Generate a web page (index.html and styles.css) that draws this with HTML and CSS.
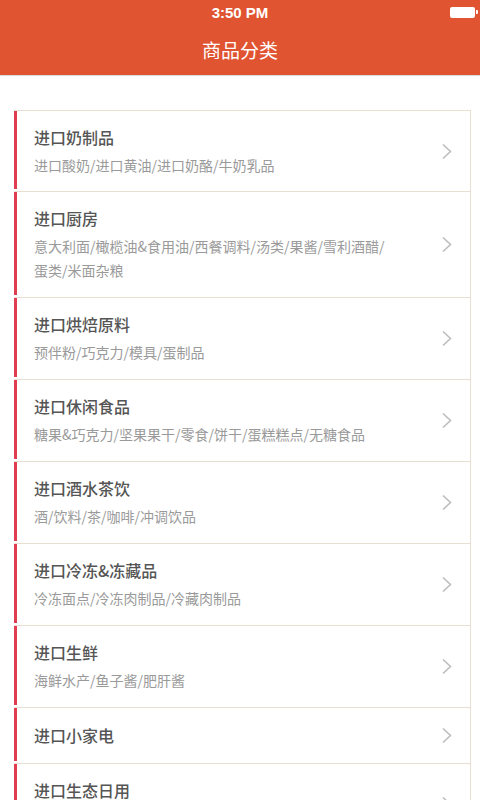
FILE: index.html
```html
<!DOCTYPE html>
<html>
  <head>
    <meta charset="utf-8">
    <title>商品分类</title>
    <link rel="stylesheet" href="styles.css">
  </head>
  <body>
    <div class="header">
      <div class="status-bar">
        <span></span>
        <span class="time">3:50 PM</span>
        <span class="battery"><span class="battery-body"></span><span class="battery-nub"></span></span>
      </div>
      <p class="title">商品分类</p>
    </div>

    <div class="category-list">
      <div class="category">
        <div class="bar"></div>
        <div class="info first">
          <p class="name">进口奶制品</p>
          <p class="sub">进口酸奶/进口黄油/进口奶酪/牛奶乳品</p>
        </div>
        <svg class="arrow" width="12" height="17" viewBox="0 0 12 17"><path d="M2 1.5 L9.5 8.5 L2 15.5" fill="none" stroke="#bdbdbd" stroke-width="1.6"/></svg>
      </div>

      <div class="category">
        <div class="bar"></div>
        <div class="info">
          <p class="name">进口厨房</p>
          <p class="sub">意大利面/橄榄油&amp;食用油/西餐调料/汤类/果酱/雪利酒醋/蛋类/米面杂粮</p>
        </div>
        <svg class="arrow" width="12" height="17" viewBox="0 0 12 17"><path d="M2 1.5 L9.5 8.5 L2 15.5" fill="none" stroke="#bdbdbd" stroke-width="1.6"/></svg>
      </div>

      <div class="category">
        <div class="bar"></div>
        <div class="info">
          <p class="name">进口烘焙原料</p>
          <p class="sub">预伴粉/巧克力/模具/蛋制品</p>
        </div>
        <svg class="arrow" width="12" height="17" viewBox="0 0 12 17"><path d="M2 1.5 L9.5 8.5 L2 15.5" fill="none" stroke="#bdbdbd" stroke-width="1.6"/></svg>
      </div>

      <div class="category">
        <div class="bar"></div>
        <div class="info">
          <p class="name">进口休闲食品</p>
          <p class="sub">糖果&amp;巧克力/坚果果干/零食/饼干/蛋糕糕点/无糖食品</p>
        </div>
        <svg class="arrow" width="12" height="17" viewBox="0 0 12 17"><path d="M2 1.5 L9.5 8.5 L2 15.5" fill="none" stroke="#bdbdbd" stroke-width="1.6"/></svg>
      </div>

      <div class="category">
        <div class="bar"></div>
        <div class="info">
          <p class="name">进口酒水茶饮</p>
          <p class="sub">酒/饮料/茶/咖啡/冲调饮品</p>
        </div>
        <svg class="arrow" width="12" height="17" viewBox="0 0 12 17"><path d="M2 1.5 L9.5 8.5 L2 15.5" fill="none" stroke="#bdbdbd" stroke-width="1.6"/></svg>
      </div>

      <div class="category">
        <div class="bar"></div>
        <div class="info">
          <p class="name">进口冷冻&amp;冻藏品</p>
          <p class="sub">冷冻面点/冷冻肉制品/冷藏肉制品</p>
        </div>
        <svg class="arrow" width="12" height="17" viewBox="0 0 12 17"><path d="M2 1.5 L9.5 8.5 L2 15.5" fill="none" stroke="#bdbdbd" stroke-width="1.6"/></svg>
      </div>

      <div class="category">
        <div class="bar"></div>
        <div class="info">
          <p class="name">进口生鲜</p>
          <p class="sub">海鲜水产/鱼子酱/肥肝酱</p>
        </div>
        <svg class="arrow" width="12" height="17" viewBox="0 0 12 17"><path d="M2 1.5 L9.5 8.5 L2 15.5" fill="none" stroke="#bdbdbd" stroke-width="1.6"/></svg>
      </div>

      <div class="category">
        <div class="bar"></div>
        <div class="info single">
          <p class="name">进口小家电</p>
        </div>
        <svg class="arrow" width="12" height="17" viewBox="0 0 12 17"><path d="M2 1.5 L9.5 8.5 L2 15.5" fill="none" stroke="#bdbdbd" stroke-width="1.6"/></svg>
      </div>

      <div class="category">
        <div class="bar"></div>
        <div class="info">
          <p class="name">进口生态日用</p>
          <p class="sub">个人护理/家居清洁</p>
        </div>
        <svg class="arrow" width="12" height="17" viewBox="0 0 12 17"><path d="M2 1.5 L9.5 8.5 L2 15.5" fill="none" stroke="#bdbdbd" stroke-width="1.6"/></svg>
      </div>
    </div>
  </body>
</html>
```

FILE: styles.css
```css
body {
  margin: 0;
  background-color: white;
  font-family: "Noto Sans CJK SC", "Noto Sans", sans-serif;
}
p {
  margin: 0;
}
.header {
  background-color: #e05431;
  color: white;
  height: 75px;
  box-shadow: 0 1px 0 #dcdcdc;
}
.status-bar {
  display: grid;
  grid-template-columns: 1fr auto 1fr;
  align-items: center;
  height: 24px;
}
.time {
  font-family: "Liberation Sans", Arial, sans-serif;
  font-weight: bold;
  font-size: 15px;
}
.battery {
  display: flex;
  align-items: center;
  justify-content: flex-end;
  padding-right: 2px;
}
.battery-body {
  width: 25px;
  height: 11px;
  background-color: white;
  border-radius: 2px;
}
.battery-nub {
  width: 2px;
  height: 4px;
  margin-left: 1px;
  background-color: white;
  border-radius: 0 1px 1px 0;
}
.title {
  text-align: center;
  font-size: 19px;
  line-height: 51px;
}
.category-list {
  margin: 35px 9px 0 14px;
  border-top: 1px solid #e6dfd2;
  border-right: 1px solid #e6dfd2;
}
.category {
  display: flex;
  align-items: center;
  border-bottom: 1px solid #e6dfd2;
}
.bar {
  align-self: stretch;
  width: 3px;
  margin-bottom: 2px;
  background-color: #e03e50;
}
.info {
  flex: 1;
  padding: 14px 50px 15px 17px;
}
.info.first {
  padding-bottom: 14px;
}
.info.single {
  padding: 15px 50px 16px 17px;
}
.name {
  font-size: 16px;
  line-height: 24px;
  font-weight: 500;
  color: #555;
}
.sub {
  margin-top: 4px;
  font-size: 14px;
  line-height: 24px;
  color: #9a9a9a;
}
.arrow {
  margin-right: 17px;
}
```
